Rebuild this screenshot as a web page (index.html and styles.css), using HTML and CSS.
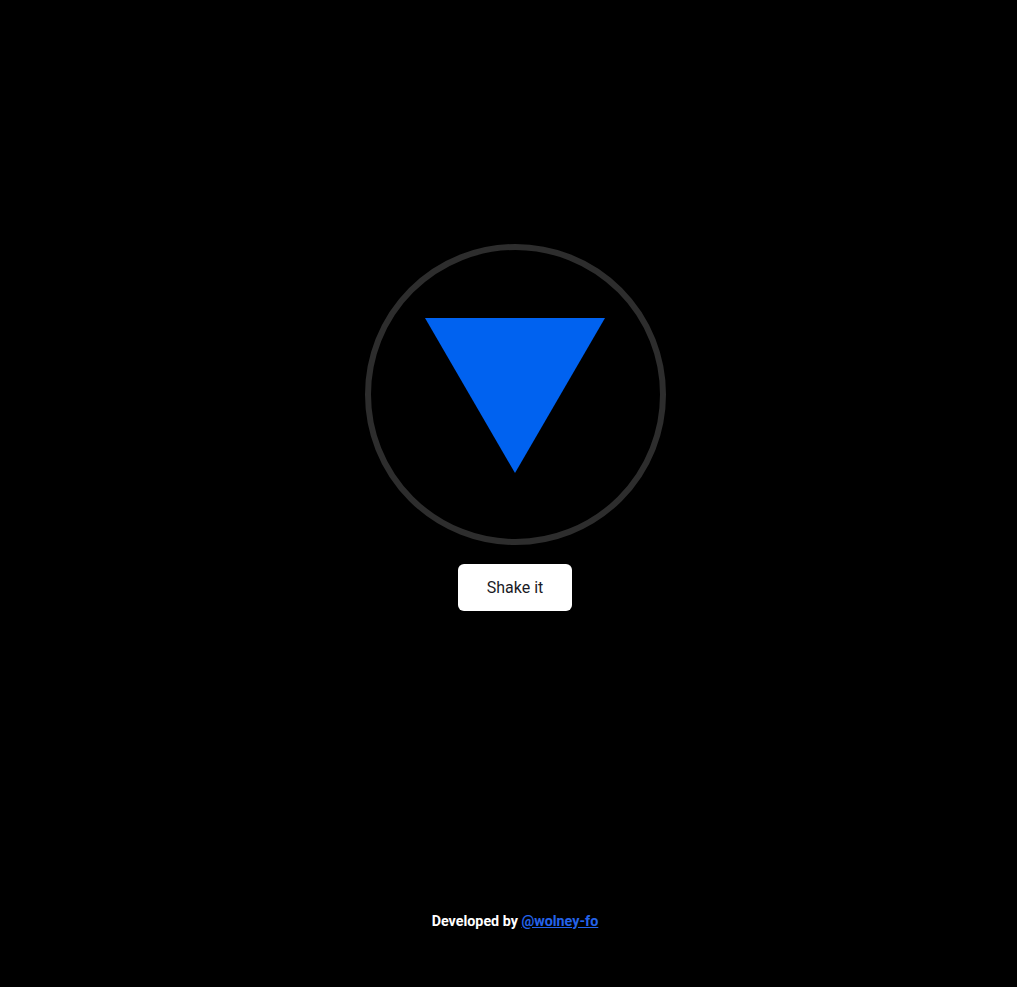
FILE: index.html
```html
<!DOCTYPE html>
<html lang="en">
<head>
<meta charset="utf-8">
<title>Magic 8 Ball</title>
<link rel="stylesheet" href="styles.css">
</head>
<body>
<div class="page">
  <main class="main">
    <div class="ball">
      <div class="triangle"></div>
    </div>
    <button class="shake">Shake it</button>
  </main>
  <footer class="footer">Developed by <a href="#">@wolney-fo</a></footer>
</div>
</body>
</html>
```

FILE: styles.css
```css
html, body {
  margin: 0;
  padding: 0;
  background: #000;
  height: 100%;
}
body {
  font-family: Roboto, "Noto Sans", sans-serif;
}
.page {
  padding-left: 13px;
  display: flex;
  flex-direction: column;
  align-items: center;
}
.main {
  padding-top: 244px;
  display: flex;
  flex-direction: column;
  align-items: center;
  gap: 19px;
}
.ball {
  width: 301px;
  height: 301px;
  box-sizing: border-box;
  border: 6px solid #2d2d2d;
  border-radius: 50%;
  display: flex;
  align-items: center;
  justify-content: center;
}
.triangle {
  width: 0;
  height: 0;
  border-left: 90px solid transparent;
  border-right: 90px solid transparent;
  border-top: 155px solid #0062f0;
  margin-top: 2px;
}
.shake {
  width: 114px;
  height: 47px;
  background: #fff;
  border: none;
  border-radius: 6px;
  font-family: Roboto, "Noto Sans", sans-serif;
  font-size: 16px;
  color: #1b1b26;
  cursor: pointer;
}
.footer {
  margin-top: 302px;
  color: #fff;
  font-size: 14.3px;
  font-weight: 700;
  line-height: 17px;
}
.footer a {
  color: #2463eb;
}
```
